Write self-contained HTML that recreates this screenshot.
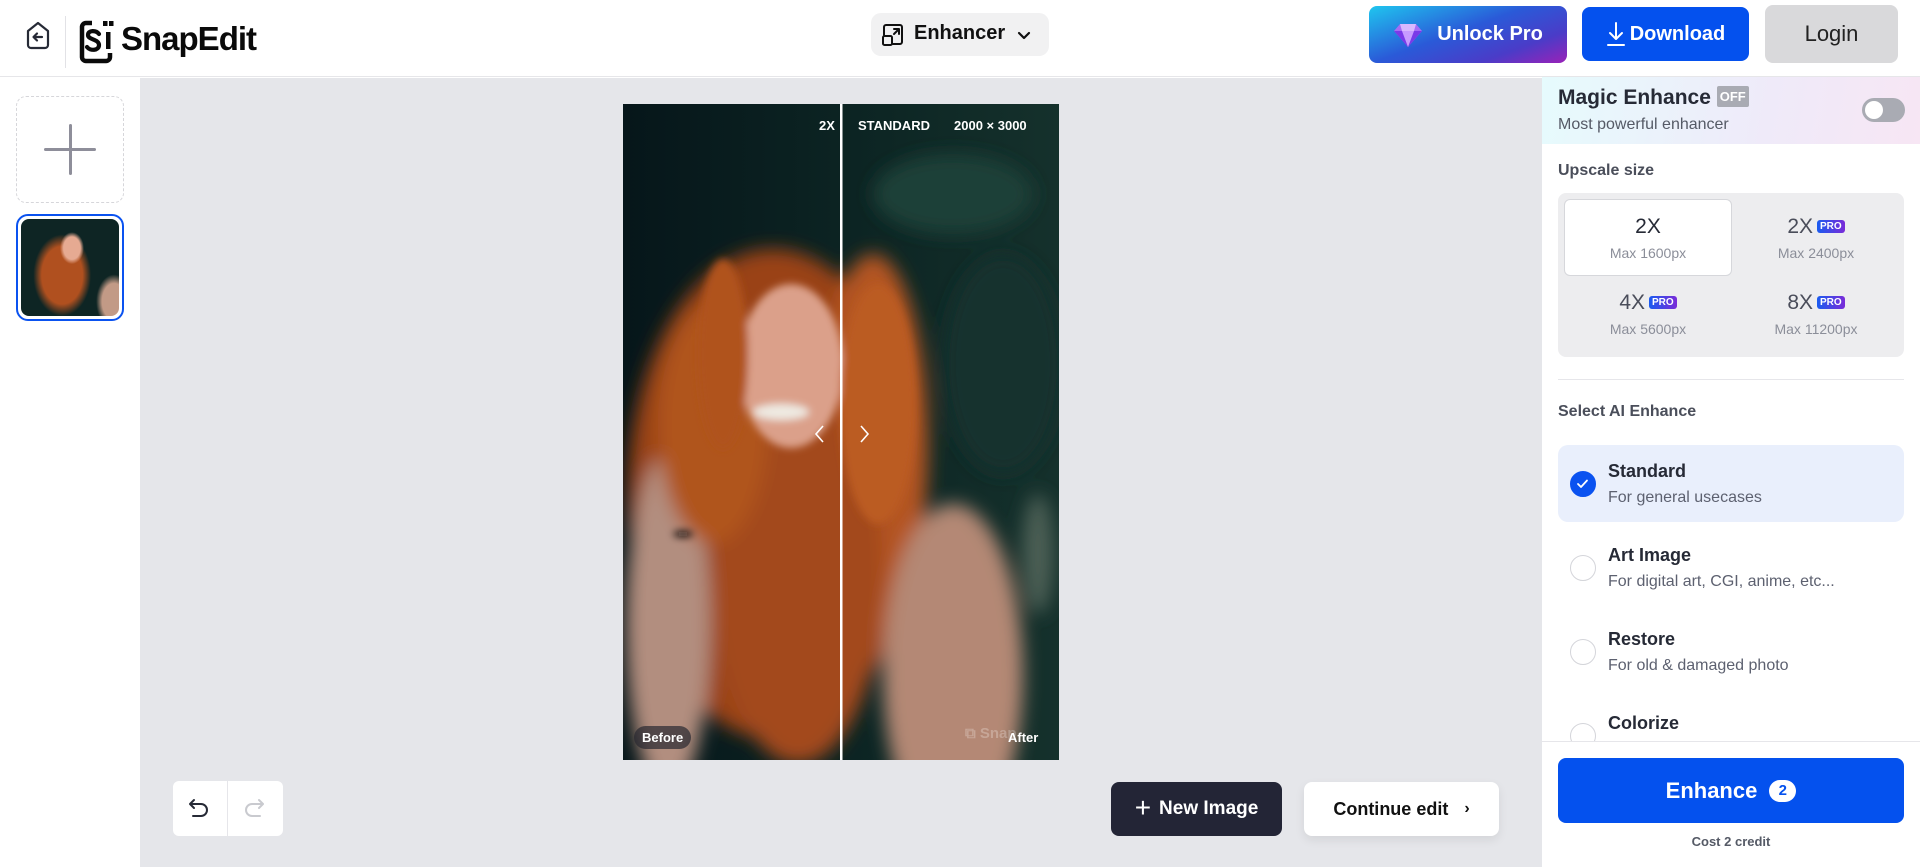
<!DOCTYPE html>
<html><head><meta charset="utf-8"><style>
*{box-sizing:border-box;margin:0;padding:0}
body{width:1920px;height:867px;overflow:hidden;font-family:"Liberation Sans",sans-serif;background:#fff;position:relative;color:#1f2333}
.a{position:absolute}
.hdr{left:0;top:0;width:1920px;height:77px;background:#fff;border-bottom:1px solid #e6e6e9}
.btn{position:absolute;display:flex;align-items:center;justify-content:center;border-radius:8px;font-weight:bold}
.panel{left:1542px;top:77px;width:378px;height:790px;background:#fff}
.cell{position:absolute;width:172px;height:76px;text-align:center}
.cell b{display:block;font-size:21px;font-weight:normal;color:#4a4d5a;margin-top:16px}
.cell span{display:block;font-size:14px;color:#8b8e99;margin-top:6px}
.pro{display:inline-block;background:linear-gradient(90deg,#1a5cf0,#7a2bd8);color:#fff;font-size:10px;font-weight:bold;font-style:normal;border-radius:3px;padding:1px 3px;vertical-align:4px;margin-left:4px}
.opt{position:absolute;left:1558px;width:346px;height:77px;border-radius:10px}
.opt .r{position:absolute;left:12px;top:26px;width:26px;height:26px;border-radius:50%;border:1.5px solid #d4d5da;background:#fff}
.opt .t{position:absolute;left:50px;top:16px;font-size:18px;font-weight:bold;color:#262a36}
.opt .s{position:absolute;left:50px;top:44px;font-size:16px;color:#5d6170}
.tag{position:absolute;color:#fff;font-size:13px;font-weight:bold}
</style></head><body>
<div class="a hdr"></div>
<svg class="a" style="left:24px;top:20px" width="28" height="30" viewBox="0 0 28 30"><path d="M4 11 L14 3 L24 11 V25 a3 3 0 0 1 -3 3 H7 a3 3 0 0 1 -3 -3 Z" fill="none" stroke="#262a36" stroke-width="2.2" stroke-linejoin="round"/><path d="M18 17 H10 M13 13.5 L9.5 17 L13 20.5" fill="none" stroke="#262a36" stroke-width="2.2" stroke-linecap="round" stroke-linejoin="round"/></svg>
<div class="a" style="left:65px;top:16px;width:1px;height:52px;background:#e2e2e6"></div>
<svg class="a" style="left:79px;top:20px" width="36" height="44" viewBox="0 0 36 44"><path d="M13 3 H7 a4 4 0 0 0 -4 4 V37 a4 4 0 0 0 4 4 H27 a4 4 0 0 0 4 -4 V33" fill="none" stroke="#0a0a0a" stroke-width="4.5"/><path d="M20 14 C17 10 9 10 9 15 C9 20 20 19 20 25 C20 31 11 31 8 27" fill="none" stroke="#0a0a0a" stroke-width="4.2" stroke-linecap="round"/><rect x="24" y="1" width="4.5" height="5" fill="#0a0a0a"/><rect x="30" y="1" width="4.5" height="5" fill="#0a0a0a"/><rect x="27" y="12" width="4.5" height="17" fill="#0a0a0a"/></svg>
<div class="a" style="left:121px;top:20px;font-size:33px;font-weight:bold;color:#0a0a0a;letter-spacing:-1px">SnapEdit</div>

<div class="a" style="left:871px;top:13px;width:178px;height:43px;background:#f1f1f2;border-radius:10px"></div>
<svg class="a" style="left:881px;top:23px" width="24" height="24" viewBox="0 0 24 24" fill="none" stroke="#111" stroke-width="2" stroke-linecap="round" stroke-linejoin="round"><path d="M3 12 V4 a2 2 0 0 1 2 -2 H19 a2 2 0 0 1 2 2 V19 a2 2 0 0 1 -2 2 H12"/><rect x="2" y="13" width="9" height="9" rx="1.5"/><path d="M13 11 L18 6 M13 6 H18 V11"/></svg>
<div class="a" style="left:914px;top:22px;font-size:20px;font-weight:bold;color:#111">Enhancer</div>
<svg class="a" style="left:1016px;top:27px" width="16" height="16" viewBox="0 0 16 16"><path d="M3 6 L8 11 L13 6" fill="none" stroke="#111" stroke-width="2.2" stroke-linecap="round" stroke-linejoin="round"/></svg>

<div class="btn" style="left:1369px;top:6px;width:198px;height:57px;background:linear-gradient(160deg,#1fc6ef 0%,#2a5ad8 45%,#4a3cc8 75%,#9a22b8 100%);color:#fff;font-size:20px"><svg width="30" height="26" viewBox="0 0 30 26" style="margin-right:14px"><path d="M7 2 H23 L29 9 L15 25 L1 9 Z" fill="#a66cf5"/><path d="M1 9 H29 L15 25 Z" fill="#7a3ae8"/><path d="M9 9 L15 25 L21 9 Z" fill="#c79bff"/><path d="M7 2 L9 9 H21 L23 2 Z" fill="#d9b8ff"/></svg>Unlock Pro</div>
<div class="btn" style="left:1582px;top:7px;width:167px;height:54px;background:#0451ee;color:#fff;font-size:20px"><svg width="20" height="26" viewBox="0 0 20 26" style="margin-right:4px"><path d="M10 2 V18 M4 12 L10 18 L16 12 M2 24 H18" fill="none" stroke="#fff" stroke-width="2" stroke-linecap="round" stroke-linejoin="round"/></svg>Download</div>
<div class="btn" style="left:1765px;top:5px;width:133px;height:58px;background:#d9d9db;color:#222;font-size:22px;font-weight:normal">Login</div>

<!-- sidebar -->
<div class="a" style="left:0;top:78px;width:140px;height:789px;background:#fff"></div>
<div class="a" style="left:16px;top:96px;width:108px;height:107px;border:1.5px dashed #d6d6da;border-radius:10px"></div>
<div class="a" style="left:69px;top:124px;width:3px;height:51px;background:#8e8e9a;border-radius:2px"></div>
<div class="a" style="left:44px;top:148px;width:52px;height:3px;background:#8e8e9a;border-radius:2px"></div>
<div class="a" style="left:16px;top:214px;width:108px;height:107px;border:2.5px solid #0a52f0;border-radius:12px;padding:3px;background:#fff"><div style="width:100%;height:100%;border-radius:8px;overflow:hidden;background:radial-gradient(ellipse 12px 16px at 52% 30%,#e6aa92 70%,transparent 100%),radial-gradient(ellipse 20px 30px at 95% 85%,#c29a86 60%,transparent 90%),radial-gradient(ellipse 34px 48px at 42% 58%,#b0501f 60%,transparent 85%),#0e2524"></div></div>

<!-- canvas -->
<div class="a" style="left:140px;top:78px;width:1402px;height:789px;background:#e5e6ea"></div>
<svg class="a" style="left:623px;top:104px" width="436" height="656" viewBox="0 0 436 656">
<defs><filter id="b" x="-20%" y="-20%" width="140%" height="140%"><feGaussianBlur stdDeviation="9"/></filter><filter id="b2" x="-20%" y="-20%" width="140%" height="140%"><feGaussianBlur stdDeviation="4"/></filter>
<linearGradient id="bg" x1="0" y1="0" x2="1" y2="0"><stop offset="0" stop-color="#06161a"/><stop offset="0.6" stop-color="#0d2624"/><stop offset="1" stop-color="#15312c"/></linearGradient></defs>
<rect width="436" height="656" fill="url(#bg)"/>
<g filter="url(#b)">
<ellipse cx="330" cy="90" rx="80" ry="40" fill="#1f3f37"/>
<ellipse cx="380" cy="260" rx="60" ry="110" fill="#17332e"/>
<ellipse cx="415" cy="450" rx="16" ry="60" fill="#4c5e55"/>
<ellipse cx="150" cy="390" rx="145" ry="245" fill="#9a4219"/>
<ellipse cx="250" cy="340" rx="55" ry="190" fill="#b45520"/>
<ellipse cx="330" cy="570" rx="70" ry="170" fill="#b48874"/>
<ellipse cx="45" cy="520" rx="42" ry="170" fill="#b28e7f"/>
<ellipse cx="175" cy="470" rx="85" ry="190" fill="#a34a1c"/>
<ellipse cx="90" cy="320" rx="55" ry="120" fill="#b0541f"/>
</g>
<g filter="url(#b2)">
<ellipse cx="168" cy="262" rx="52" ry="82" fill="#dba08a"/>
<ellipse cx="158" cy="308" rx="28" ry="8" fill="#eeeae2"/>
<ellipse cx="100" cy="250" rx="25" ry="95" fill="#b0521c"/>
<ellipse cx="255" cy="300" rx="38" ry="120" fill="#bb5c22"/>
<ellipse cx="60" cy="430" rx="10" ry="3" fill="#111"/>
</g>
<rect x="217" y="0" width="2.5" height="656" fill="#fff"/>
<path d="M200 322 L193 330 L200 338" fill="none" stroke="#fff" stroke-width="1.6"/>
<path d="M238 322 L245 330 L238 338" fill="none" stroke="#fff" stroke-width="1.6"/>
</svg>
<div class="tag" style="left:819px;top:118px">2X</div>
<div class="tag" style="left:858px;top:118px">STANDARD</div>
<div class="tag" style="left:954px;top:118px">2000 × 3000</div>
<div class="tag" style="left:634px;top:726px;background:rgba(40,40,48,.7);padding:4px 8px;border-radius:12px">Before</div>
<div class="tag" style="left:1008px;top:730px">After</div>
<div class="a" style="left:965px;top:725px;color:rgba(255,255,255,.25);font-size:15px;font-weight:bold">⧉ Snap</div>

<div class="a" style="left:173px;top:781px;width:110px;height:55px;background:#fff;border-radius:6px"></div>
<div class="a" style="left:227px;top:781px;width:1px;height:55px;background:#e6e6ea"></div>
<svg class="a" style="left:186px;top:796px" width="26" height="26" viewBox="0 0 26 26"><path d="M8 4 L4 8 L8 12 M4 8 H15 a6 6 0 0 1 0 12 H7" fill="none" stroke="#262a36" stroke-width="2" stroke-linecap="round" stroke-linejoin="round"/></svg>
<svg class="a" style="left:241px;top:796px" width="26" height="26" viewBox="0 0 26 26"><path d="M18 4 L22 8 L18 12 M22 8 H11 a6 6 0 0 0 0 12 H19" fill="none" stroke="#c9cacf" stroke-width="2" stroke-linecap="round" stroke-linejoin="round"/></svg>
<div class="btn" style="left:1111px;top:782px;width:171px;height:54px;background:#232536;color:#fff;font-size:19px"><span style="font-size:28px;font-weight:normal;margin-right:8px;margin-top:-3px">+</span>New Image</div>
<div class="btn" style="left:1304px;top:782px;width:195px;height:54px;background:#fff;color:#111;font-size:18px;box-shadow:0 4px 10px rgba(0,0,0,.08)">Continue edit<span style="margin-left:16px;font-size:16px">›</span></div>

<!-- panel -->
<div class="a panel"></div>
<div class="a" style="left:1542px;top:77px;width:378px;height:67px;background:linear-gradient(100deg,#e6fbfd 0%,#efeaf9 60%,#f7e6f4 100%)"></div>
<div class="a" style="left:1558px;top:86px;font-size:21px;font-weight:bold;color:#262a36">Magic Enhance <span style="background:#a9abb3;color:#fff;font-size:13px;padding:3px 3px;border-radius:2px;vertical-align:3px">OFF</span></div>
<div class="a" style="left:1558px;top:116px;font-size:16px;color:#555a66">Most powerful enhancer</div>
<div class="a" style="left:1862px;top:98px;width:43px;height:24px;border-radius:12px;background:#a9abb3"><div style="position:absolute;left:3px;top:3px;width:18px;height:18px;border-radius:50%;background:#fff"></div></div>
<div class="a" style="left:1558px;top:162px;font-size:16px;font-weight:bold;color:#4a4e5a">Upscale size</div>
<div class="a" style="left:1558px;top:193px;width:346px;height:164px;background:#ededef;border-radius:8px"></div>
<div class="a" style="left:1564px;top:199px;width:168px;height:77px;background:#fff;border:1px solid #d6d7db;border-radius:6px"></div>
<div class="cell" style="left:1562px;top:199px"><b style="color:#262a36">2X</b><span>Max 1600px</span></div>
<div class="cell" style="left:1730px;top:199px"><b>2X<i class="pro">PRO</i></b><span>Max 2400px</span></div>
<div class="cell" style="left:1562px;top:275px"><b>4X<i class="pro">PRO</i></b><span>Max 5600px</span></div>
<div class="cell" style="left:1730px;top:275px"><b>8X<i class="pro">PRO</i></b><span>Max 11200px</span></div>
<div class="a" style="left:1558px;top:379px;width:346px;height:1px;background:#e6e6ea"></div>
<div class="a" style="left:1558px;top:403px;font-size:16px;font-weight:bold;color:#4a4e5a">Select AI Enhance</div>
<div class="opt" style="top:445px;background:#e9effc"><div class="r" style="background:#0a52f0;border-color:#0a52f0"><svg width="23" height="23" viewBox="0 0 23 23" style="position:absolute;left:0;top:0"><path d="M7 12 L10 15 L16 8.5" fill="none" stroke="#fff" stroke-width="1.8" stroke-linecap="round" stroke-linejoin="round"/></svg></div><div class="t">Standard</div><div class="s">For general usecases</div></div>
<div class="opt" style="top:529px"><div class="r"></div><div class="t">Art Image</div><div class="s">For digital art, CGI, anime, etc...</div></div>
<div class="opt" style="top:613px"><div class="r"></div><div class="t">Restore</div><div class="s">For old &amp; damaged photo</div></div>
<div class="a" style="left:1542px;top:697px;width:378px;height:44px;overflow:hidden"><div class="opt" style="left:16px;top:0"><div class="r"></div><div class="t">Colorize</div></div></div>
<div class="a" style="left:1542px;top:741px;width:378px;height:1px;background:#e6e6ea"></div>
<div class="btn" style="left:1558px;top:758px;width:346px;height:65px;background:#0451ee;color:#fff;font-size:22px;border-radius:8px">Enhance<span style="display:inline-block;margin-left:12px;background:#fff;color:#0451ee;border-radius:12px;width:27px;height:22px;font-size:15px;line-height:22px;text-align:center">2</span></div>
<div class="a" style="left:1558px;top:834px;width:346px;text-align:center;font-size:13px;font-weight:bold;color:#555a66">Cost 2 credit</div>
</body></html>
